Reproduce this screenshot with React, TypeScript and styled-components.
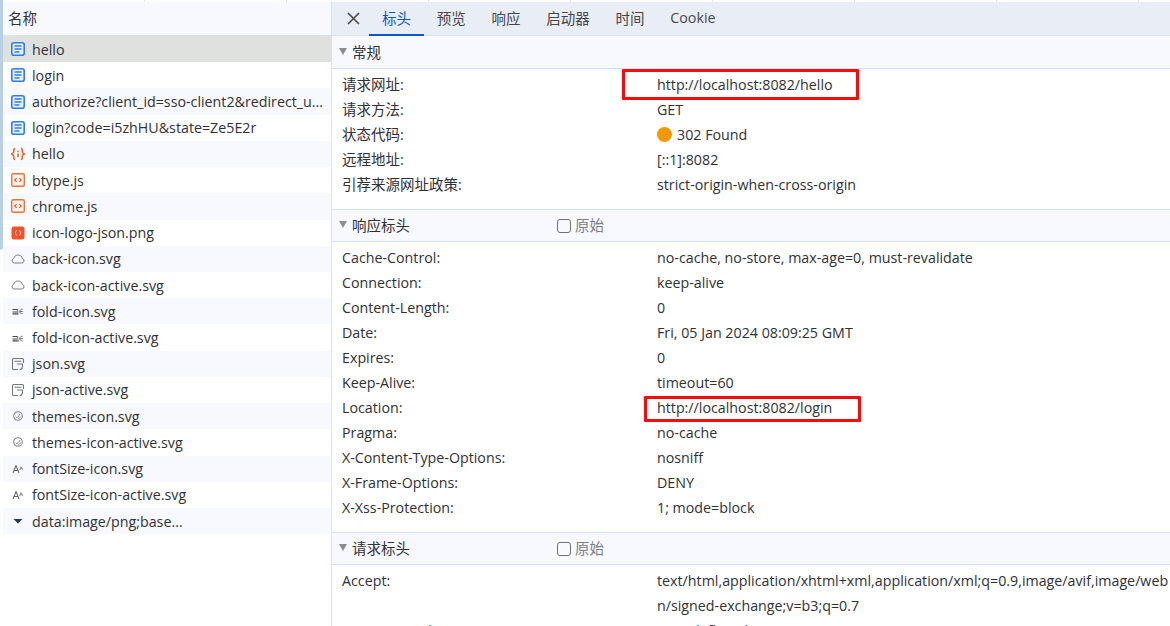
import React from 'react';
import styled, { createGlobalStyle } from 'styled-components';

const GlobalStyle = createGlobalStyle`
  html, body {
    margin: 0;
    height: 100%;
    overflow: hidden;
    background: #fff;
  }
  body {
    font-family: 'Open Sans', 'Noto Sans CJK SC', sans-serif;
    color: #303134;
  }
`;

const Page = styled.div`
  display: flex;
  width: 1170px;
  height: 626px;
  overflow: hidden;
`;
const Gutter = styled.div`
  flex: 0 0 3px;
`;
const GutterThumb = styled.div`
  height: 250px;
  background: #b9cfe4;
  border-bottom-right-radius: 3px;
`;
const Main = styled.div`
  flex: 1;
  display: flex;
  flex-direction: column;
  min-width: 0;
`;
const TopStrip = styled.div`
  flex: 0 0 2px;
  display: flex;
`;
const TopCell = styled.div`
  flex: 0 0 142px;
  border-right: 1px solid #dbe6f7;
  box-sizing: border-box;
`;
const Panels = styled.div`
  flex: 1;
  display: flex;
  min-height: 0;
`;

const Sidebar = styled.aside`
  flex: 0 0 329px;
  border-right: 1px solid #d3e3fd;
  box-sizing: border-box;
`;
const SidebarHead = styled.div`
  height: 34px;
  box-sizing: border-box;
  display: flex;
  align-items: center;
  padding: 0 0 2px 5px;
  background: #f8f9fe;
  border-bottom: 1px solid #d3e3fd;
  font-size: 14.5px;
`;
const FileRow = styled.div<{ $selected?: boolean; $tint: boolean }>`
  height: 26.22px;
  display: flex;
  align-items: center;
  padding-left: 8px;
  font-size: 14.25px;
  white-space: nowrap;
  background: ${(p) => (p.$selected ? '#dfe1de' : p.$tint ? '#f8f9fe' : '#fff')};
`;
const FileIcon = styled.svg`
  flex: 0 0 14px;
  width: 14px;
  height: 14px;
  margin-right: 7px;
`;

const Detail = styled.section`
  flex: 1;
  min-width: 0;
  overflow: hidden;
`;
const TabBar = styled.div`
  height: 34px;
  box-sizing: border-box;
  display: flex;
  align-items: stretch;
  background: #e9edf6;
  border-bottom: 1px solid #d3e3fd;
  padding-left: 15px;
`;
const CloseButton = styled.svg`
  width: 13px;
  height: 13px;
  align-self: center;
  margin-right: 9px;
`;
const Tab = styled.div<{ $active?: boolean }>`
  display: flex;
  align-items: center;
  padding: 0 12.9px 2px;
  margin-bottom: -1px;
  font-size: 14.5px;
  color: ${(p) => (p.$active ? '#0b57d0' : '#474747')};
  border-bottom: 2px solid ${(p) => (p.$active ? '#0b57d0' : 'transparent')};
  box-sizing: border-box;
`;
const TabLatin = styled(Tab)`
  font-size: 14.25px;
`;

const SectionHead = styled.div<{ $first?: boolean }>`
  height: 33px;
  box-sizing: border-box;
  display: flex;
  align-items: center;
  padding: 0 0 2px 7px;
  background: #f8f9fe;
  border-bottom: 1px solid #d3e3fd;
  border-top: ${(p) => (p.$first ? 'none' : '1px solid #d3e3fd')};
  font-size: 14.5px;
`;
const Caret = styled.span`
  width: 0;
  height: 0;
  border-left: 4px solid transparent;
  border-right: 4px solid transparent;
  border-top: 7px solid #8b8f94;
  margin-right: 5px;
`;
const SectionTitle = styled.span`
  flex: 0 0 205px;
`;
const RawToggle = styled.label`
  display: flex;
  align-items: center;
  color: #7c7f82;
`;
const RawBox = styled.span`
  width: 14px;
  height: 14px;
  box-sizing: border-box;
  border: 1.5px solid #6e7175;
  border-radius: 3px;
  margin: 2px 4px 0 0;
`;
const HeaderList = styled.div`
  padding: 3px 0 12px;
`;
const HeaderRow = styled.div`
  display: grid;
  grid-template-columns: 315px 1fr;
  padding-left: 10px;
`;
const HeaderName = styled.div<{ $cjk?: boolean }>`
  height: 25px;
  line-height: 25px;
  font-size: ${(p) => (p.$cjk ? '14.5px' : '14.25px')};
  white-space: nowrap;
`;
const HeaderValue = styled.div`
  position: relative;
  font-size: 14.25px;
  line-height: 25px;
  min-width: 0;
`;
const ValueLine = styled.div`
  height: 25px;
  white-space: nowrap;
  display: flex;
  align-items: center;
`;
const StatusDot = styled.span`
  width: 15px;
  height: 15px;
  border-radius: 50%;
  background: #f29900;
  margin-right: 5px;
`;
const Highlight = styled.div<{ $left: number; $top: number; $w: number; $h: number }>`
  position: absolute;
  left: ${(p) => p.$left}px;
  top: ${(p) => p.$top}px;
  width: ${(p) => p.$w}px;
  height: ${(p) => p.$h}px;
  box-sizing: border-box;
  border: 3px solid #f50c0c;
  border-radius: 1px;
`;

type IconKind = 'doc' | 'fetch' | 'script' | 'png' | 'cloud' | 'fold' | 'json' | 'theme' | 'font' | 'arrow';

const Icon = ({ kind }: { kind: IconKind }) => {
  switch (kind) {
    case 'doc':
      return (
        <FileIcon viewBox="0 0 14 14">
          <rect x="0.8" y="0.8" width="12.4" height="12.4" rx="2" fill="#e8f0fe" stroke="#2f7bef" strokeWidth="1.6" />
          <path d="M3.5 4h7M3.5 7h7M3.5 10h5" stroke="#2f7bef" strokeWidth="1.4" fill="none" />
        </FileIcon>
      );
    case 'fetch':
      return (
        <FileIcon viewBox="0 0 14 14">
          <path
            d="M4.200 1.500C2.400 1.500 2.800 3.200 2.800 4.600 2.800 6 1.600 6.600.6 7c1 .4 2.200 1 2.200 2.400 0 1.400-.4 3.100 1.400 3.100M9.800 1.500c1.800 0 1.400 1.700 1.400 3.100 0 1.400 1.200 2 2.200 2.400-1 .4-2.200 1-2.200 2.400 0 1.400.4 3.100-1.400 3.100"
            fill="none"
            stroke="#ea6a2e"
            strokeWidth="1.600"
          />
          <path d="M7 3.800v1.400M7 6.400v3.800" stroke="#ea6a2e" strokeWidth="1.600" />
        </FileIcon>
      );
    case 'script':
      return (
        <FileIcon viewBox="0 0 14 14">
          <rect x="0.7" y="0.7" width="12.6" height="12.6" rx="1.5" fill="#fdf1ea" stroke="#e8763a" strokeWidth="1.4" />
          <path d="M5.6 5.2 3.8 7l1.8 1.800M8.400 5.200 10.200 7 8.400 8.800" fill="none" stroke="#d9602a" strokeWidth="1.2" />
        </FileIcon>
      );
    case 'png':
      return (
        <FileIcon viewBox="0 0 14 14">
          <rect x="0.500" y="0.500" width="13" height="13" rx="2.500" fill="#f4502a" />
          <path d="M5.600 4.600C4.600 4.600 5 6.400 4.200 7c.8.600.4 2.400 1.400 2.400M8.400 4.600c1 0 .6 1.800 1.400 2.400-.8.600-.4 2.400-1.400 2.400" fill="none" stroke="#fff" strokeWidth="0.900" />
        </FileIcon>
      );
    case 'cloud':
      return (
        <FileIcon viewBox="0 0 14 14">
          <path
            d="M3.200 11h7.600a2.300 2.300 0 0 0 .6-4.500C11 4.400 9.200 3 7 3S3.100 4.400 2.700 6.500A2.300 2.300 0 0 0 3.200 11Z"
            fill="none"
            stroke="#7a7d81"
            strokeWidth="1"
          />
        </FileIcon>
      );
    case 'fold':
      return (
        <FileIcon viewBox="0 0 14 14">
          <path d="M1.500 5.500h4.500l1 1M1.500 8h6M1.500 9.800h6" fill="none" stroke="#45484c" strokeWidth="1.200" />
          <path d="M11.800 5.200C9.800 5.200 8.600 6.200 8.600 7.500s1.200 2.300 3.200 2.300M9 7.500h2.800" fill="none" stroke="#6d7175" strokeWidth="1" />
        </FileIcon>
      );
    case 'json':
      return (
        <FileIcon viewBox="0 0 14 14">
          <path d="M12.500 6V2.500a1 1 0 0 0-1-1h-9a1 1 0 0 0-1 1v9a1 1 0 0 0 1 1H7" fill="none" stroke="#74777b" strokeWidth="1.100" />
          <path d="M3.500 4.200h7M6 7h5.500v2.500c0 2-1.500 3-3 3" fill="none" stroke="#74777b" strokeWidth="1.100" />
        </FileIcon>
      );
    case 'theme':
      return (
        <FileIcon viewBox="0 0 14 14">
          <circle cx="7" cy="7" r="4.300" fill="none" stroke="#85888c" strokeWidth="1.100" />
          <path d="M5.200 8.600c1.400 0 2.800-1.400 3.800-3.600M7 9.800c1 0 2-1 2.600-2.200" fill="none" stroke="#85888c" strokeWidth="1" />
        </FileIcon>
      );
    case 'font':
      return (
        <FileIcon viewBox="0 0 14 14">
          <path d="M2 11 5 3.500 8 11M3.200 8.500h3.600" fill="none" stroke="#54575b" strokeWidth="1" />
          <path d="M8.500 8 10 4.500 11.800 8M9 6.800h2.400" fill="none" stroke="#7d8185" strokeWidth="0.800" />
        </FileIcon>
      );
    default:
      return (
        <FileIcon viewBox="0 0 14 14">
          <path d="M2.500 5h9L7 9.500Z" fill="#2c3550" />
        </FileIcon>
      );
  }
};

const files: { name: string; icon: IconKind }[] = [
  { name: 'hello', icon: 'doc' },
  { name: 'login', icon: 'doc' },
  { name: 'authorize?client_id=sso-client2&redirect_u...', icon: 'doc' },
  { name: 'login?code=i5zhHU&state=Ze5E2r', icon: 'doc' },
  { name: 'hello', icon: 'fetch' },
  { name: 'btype.js', icon: 'script' },
  { name: 'chrome.js', icon: 'script' },
  { name: 'icon-logo-json.png', icon: 'png' },
  { name: 'back-icon.svg', icon: 'cloud' },
  { name: 'back-icon-active.svg', icon: 'cloud' },
  { name: 'fold-icon.svg', icon: 'fold' },
  { name: 'fold-icon-active.svg', icon: 'fold' },
  { name: 'json.svg', icon: 'json' },
  { name: 'json-active.svg', icon: 'json' },
  { name: 'themes-icon.svg', icon: 'theme' },
  { name: 'themes-icon-active.svg', icon: 'theme' },
  { name: 'fontSize-icon.svg', icon: 'font' },
  { name: 'fontSize-icon-active.svg', icon: 'font' },
  { name: 'data:image/png;base...', icon: 'arrow' },
];

const responseHeaders = [
  ['Cache-Control:', 'no-cache, no-store, max-age=0, must-revalidate'],
  ['Connection:', 'keep-alive'],
  ['Content-Length:', '0'],
  ['Date:', 'Fri, 05 Jan 2024 08:09:25 GMT'],
  ['Expires:', '0'],
  ['Keep-Alive:', 'timeout=60'],
  ['Location:', 'http://localhost:8082/login'],
  ['Pragma:', 'no-cache'],
  ['X-Content-Type-Options:', 'nosniff'],
  ['X-Frame-Options:', 'DENY'],
  ['X-Xss-Protection:', '1; mode=block'],
];

const App = () => {
  return (
    <Page>
      <GlobalStyle />
      <Gutter>
        <GutterThumb />
      </Gutter>
      <Main>
        <TopStrip>
          {Array.from({ length: 8 }).map((_, i) => (
            <TopCell key={i} />
          ))}
        </TopStrip>
        <Panels>
          <Sidebar>
            <SidebarHead>名称</SidebarHead>
            {files.map((file, i) => (
              <FileRow key={i} $selected={i === 0} $tint={i % 2 === 0}>
                <Icon kind={file.icon} />
                {file.name}
              </FileRow>
            ))}
          </Sidebar>
          <Detail>
            <TabBar>
              <CloseButton viewBox="0 0 13 13">
                <path d="M1 1l11 11M12 1 1 12" stroke="#474747" strokeWidth="1.6" />
              </CloseButton>
              <Tab $active>标头</Tab>
              <Tab>预览</Tab>
              <Tab>响应</Tab>
              <Tab>启动器</Tab>
              <Tab>时间</Tab>
              <TabLatin>Cookie</TabLatin>
            </TabBar>

            <SectionHead $first>
              <Caret />
              <SectionTitle>常规</SectionTitle>
            </SectionHead>
            <HeaderList>
              <HeaderRow>
                <HeaderName $cjk>请求网址:</HeaderName>
                <HeaderValue>
                  <ValueLine>http://localhost:8082/hello</ValueLine>
                  <Highlight $left={-35} $top={-3} $w={237} $h={31} />
                </HeaderValue>
              </HeaderRow>
              <HeaderRow>
                <HeaderName $cjk>请求方法:</HeaderName>
                <HeaderValue>GET</HeaderValue>
              </HeaderRow>
              <HeaderRow>
                <HeaderName $cjk>状态代码:</HeaderName>
                <HeaderValue>
                  <ValueLine>
                    <StatusDot />
                    302 Found
                  </ValueLine>
                </HeaderValue>
              </HeaderRow>
              <HeaderRow>
                <HeaderName $cjk>远程地址:</HeaderName>
                <HeaderValue>[::1]:8082</HeaderValue>
              </HeaderRow>
              <HeaderRow>
                <HeaderName $cjk>引荐来源网址政策:</HeaderName>
                <HeaderValue>strict-origin-when-cross-origin</HeaderValue>
              </HeaderRow>
            </HeaderList>

            <SectionHead>
              <Caret />
              <SectionTitle>响应标头</SectionTitle>
              <RawToggle>
                <RawBox />
                原始
              </RawToggle>
            </SectionHead>
            <HeaderList>
              {responseHeaders.map(([name, value]) => (
                <HeaderRow key={name}>
                  <HeaderName>{name}</HeaderName>
                  <HeaderValue>
                    {value}
                    {name === 'Location:' && <Highlight $left={-13} $top={1} $w={217} $h={26} />}
                  </HeaderValue>
                </HeaderRow>
              ))}
            </HeaderList>

            <SectionHead>
              <Caret />
              <SectionTitle>请求标头</SectionTitle>
              <RawToggle>
                <RawBox />
                原始
              </RawToggle>
            </SectionHead>
            <HeaderList>
              <HeaderRow>
                <HeaderName>Accept:</HeaderName>
                <HeaderValue>
                  <ValueLine>text/html,application/xhtml+xml,application/xml;q=0.9,image/avif,image/web</ValueLine>
                  <ValueLine>n/signed-exchange;v=b3;q=0.7</ValueLine>
                </HeaderValue>
              </HeaderRow>
              <HeaderRow>
                <HeaderName>Accept-Encoding:</HeaderName>
                <HeaderValue>gzip, deflate, br</HeaderValue>
              </HeaderRow>
            </HeaderList>
          </Detail>
        </Panels>
      </Main>
    </Page>
  );
};

export default App;
